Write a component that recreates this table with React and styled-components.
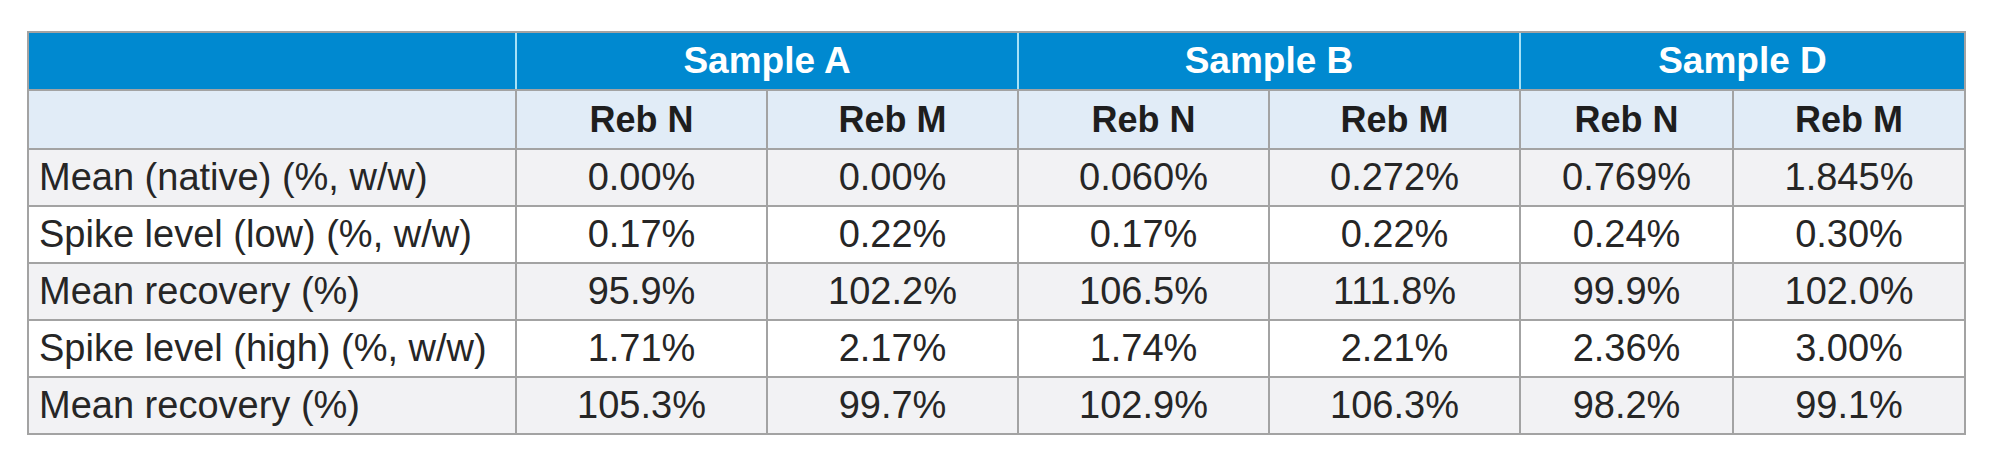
import styled, { createGlobalStyle } from "styled-components";

const GlobalStyle = createGlobalStyle`
    body {
        margin: 0;
        background: #ffffff;
        font-family: "Liberation Sans", Arial, sans-serif;
    }
`

const echantillons = ["Sample A", "Sample B", "Sample D"];

const lignes = [
    { label: "Mean (native) (%, w/w)", valeurs: ["0.00%", "0.00%", "0.060%", "0.272%", "0.769%", "1.845%"] },
    { label: "Spike level (low) (%, w/w)", valeurs: ["0.17%", "0.22%", "0.17%", "0.22%", "0.24%", "0.30%"] },
    { label: "Mean recovery (%)", valeurs: ["95.9%", "102.2%", "106.5%", "111.8%", "99.9%", "102.0%"] },
    { label: "Spike level (high) (%, w/w)", valeurs: ["1.71%", "2.17%", "1.74%", "2.21%", "2.36%", "3.00%"] },
    { label: "Mean recovery (%)", valeurs: ["105.3%", "99.7%", "102.9%", "106.3%", "98.2%", "99.1%"] },
];

const largeurs = [488, 251, 251, 251, 251, 213, 232];

const App = () => {
    return (
        <Page>
            <GlobalStyle />
            <Tableau>
                <colgroup>
                    {largeurs.map((l, i) => <col key={i} style={{ width: l }} />)}
                </colgroup>
                <thead>
                    <LigneBleue>
                        <CelluleBleue />
                        {echantillons.map((nom) => (
                            <CelluleBleue key={nom} colSpan={2}>{nom}</CelluleBleue>
                        ))}
                    </LigneBleue>
                    <LigneSousTitre>
                        <CelluleSousTitre />
                        {echantillons.map((nom) => [
                            <CelluleSousTitre key={nom + "N"}>Reb N</CelluleSousTitre>,
                            <CelluleSousTitre key={nom + "M"}>Reb M</CelluleSousTitre>,
                        ])}
                    </LigneSousTitre>
                </thead>
                <tbody>
                    {lignes.map((ligne, index) => (
                        <Ligne key={index} $grise={index % 2 === 0}>
                            <Etiquette>{ligne.label}</Etiquette>
                            {ligne.valeurs.map((v, j) => (
                                <Valeur key={j}>{v}</Valeur>
                            ))}
                        </Ligne>
                    ))}
                </tbody>
            </Tableau>
        </Page>
    )
}

const Page = styled.div`
    padding: 31px 0 0 27px;
`

const Tableau = styled.table`
    width: 1937px;
    table-layout: fixed;
    border-collapse: collapse;
    border: 2px solid #a3a3a3;
    color: #262626;
`

const LigneBleue = styled.tr`
    height: 58px;
    background-color: #0089d0;
`

const CelluleBleue = styled.th`
    padding: 0;
    color: #ffffff;
    font-size: 37px;
    font-weight: 700;
    text-align: center;
    border-left: 2px solid #a6e1f7;
    border-top: 2px solid #a3a3a3;
    border-bottom: 2px solid #a3a3a3;
    &:first-child {
        border-left: 2px solid #a3a3a3;
    }
`

const LigneSousTitre = styled.tr`
    height: 59px;
    background-color: #e1ecf7;
`

const CelluleSousTitre = styled.th`
    padding: 0;
    font-size: 36px;
    font-weight: 700;
    text-align: center;
    color: #1e1e1e;
    border: 2px solid #a3a3a3;
`

const Ligne = styled.tr`
    height: 57px;
    background-color: ${(p) => (p.$grise ? "#f2f2f4" : "#ffffff")};
`

const Etiquette = styled.td`
    padding: 0 0 0 10px;
    font-size: 38px;
    text-align: left;
    white-space: nowrap;
    border: 2px solid #a3a3a3;
`

const Valeur = styled.td`
    padding: 0;
    font-size: 38px;
    text-align: center;
    border: 2px solid #a3a3a3;
`

export default App;
